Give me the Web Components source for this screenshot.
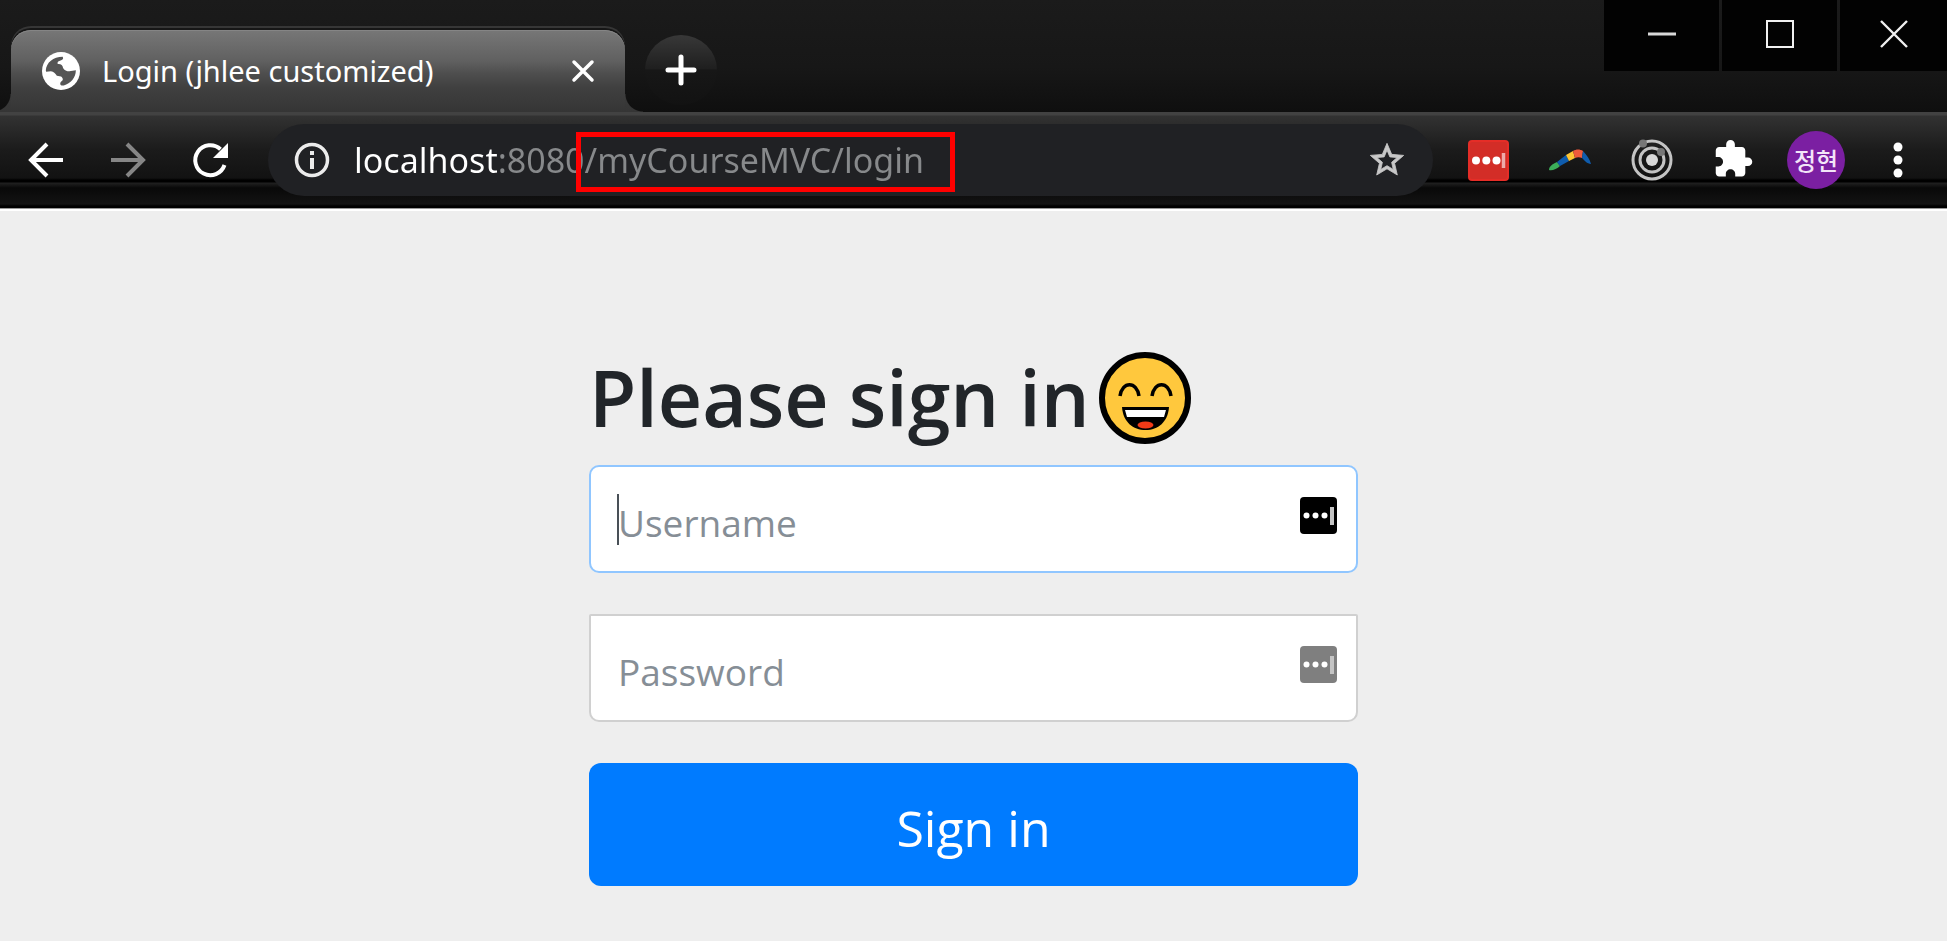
<!DOCTYPE html>
<html lang="en">
<head>
<meta charset="utf-8">
<title>Login (jhlee customized)</title>
<style>
  html, body { height: 100%; margin: 0; }
  body { font-family: "Open Sans", "Noto Sans", "Noto Sans CJK KR", sans-serif; background: #eee; }
</style>
</head>
<body>
<browser-window>
  <tab-strip slot="tabs">
    <browser-tab>Login (jhlee customized)</browser-tab>
  </tab-strip>
  <tool-bar slot="toolbar">
    <address-bar url="localhost:8080/myCourseMVC/login"></address-bar>
  </tool-bar>
  <login-form>
    <text-field name="username" label="Username" type="text" active></text-field>
    <text-field name="password" label="Password" type="password"></text-field>
  </login-form>
</browser-window>

<script>
const base = `
  :host, *, *::before, *::after { box-sizing: border-box; }
  button { font: inherit; color: inherit; border: 0; margin: 0; padding: 0; background: none; display: grid; place-items: center; }
  svg { display: block; }
`;

function define(name, markup, setup) {
  const template = document.createElement('template');
  template.innerHTML = markup;
  customElements.define(name, class extends HTMLElement {
    connectedCallback() {
      if (this.shadowRoot) return;
      this.attachShadow({ mode: 'open' }).append(template.content.cloneNode(true));
      if (setup) setup(this, this.shadowRoot);
    }
  });
}

define('browser-window', `
<style>${base}
  :host { display: flex; flex-direction: column; min-height: 100%; }
  main { flex: 1; border-top: 2px solid #fff; background: #eee; }
</style>
<slot name="tabs"></slot>
<slot name="toolbar"></slot>
<main><slot></slot></main>
`);

define('tab-strip', `
<style>${base}
  :host { display: flex; align-items: flex-end; height: 112px; padding-left: 11px; color: #fff;
    background: linear-gradient(#1b1b1b, #171717 60%, #0f0f0f); }
  .new { width: 72px; height: 70px; margin: 0 auto 7px 20px; border-radius: 50%;
    background: linear-gradient(#383838, #1f1f1f 48%, #171717 50%, #121212); }
  .controls { display: flex; gap: 3px; align-self: flex-start; }
  .controls button { width: 115px; height: 71px; padding-bottom: 3px; background: #020202; }
  .controls button:last-child { width: 107px; }
</style>
<slot></slot>
<button class="new" aria-label="New tab">
  <svg width="32" height="32" viewBox="0 0 32 32" stroke="#fff" stroke-width="5" stroke-linecap="round"><path d="M16 3V29M3 16H29"/></svg>
</button>
<div class="controls">
  <button aria-label="Minimize"><svg width="28" height="28" viewBox="0 0 28 28" stroke="#d8d8d8" stroke-width="3"><path d="M0 14H28"/></svg></button>
  <button aria-label="Maximize"><svg width="28" height="28" viewBox="0 0 28 28" fill="none" stroke="#f0f0f0" stroke-width="2"><path d="M1 1H27V27H1Z"/></svg></button>
  <button aria-label="Close"><svg width="28" height="28" viewBox="0 0 28 28" stroke="#f0f0f0" stroke-width="2.400"><path d="M1 1L27 27M27 1L1 27"/></svg></button>
</div>
`);

define('browser-tab', `
<style>${base}
  :host { position: relative; display: flex; align-items: center; width: 614px; height: 82px; padding: 0 26px 0 31px;
    border-radius: 20px 20px 0 0; font: 29px/40px "Noto Sans", sans-serif;
    background: linear-gradient(#777, #606060 38%, #4f4f4f 52%, #404040 70%, #353535);
    box-shadow: inset 0 1px #858585, 0 -2px #161616, 0 -4px #363636; }
  :host::before, :host::after { content: ""; position: absolute; bottom: 0; width: 18px; height: 18px;
    background: linear-gradient(#3b3b3b, #353535); }
  :host::before { right: 100%; -webkit-mask: radial-gradient(circle at 0 0, transparent 17px, #000 18px); mask: radial-gradient(circle at 0 0, transparent 17px, #000 18px); }
  :host::after { left: 100%; -webkit-mask: radial-gradient(circle at 100% 0, transparent 17px, #000 18px); mask: radial-gradient(circle at 100% 0, transparent 17px, #000 18px); }
  .title { flex: 1; margin-left: 22px; white-space: nowrap; }
  button { width: 32px; height: 32px; }
</style>
<svg width="38" height="38" viewBox="0 0 110 110"><circle cx="55" cy="55" r="55" fill="#fff"/><path fill="#555" d="M11 53C13 31 32 14 60 14C63 20 60 24 52 25C46 26 43 31 46 35C54 34 60 38 61 46C64 52 72 56 79 56L98 53C98 74 83 92 63 97C52 99 51 91 55 86C63 82 61 75 55 71L43 69C38 62 34 57 26 56L12 57Z"/></svg>
<span class="title"><slot></slot></span>
<button aria-label="Close tab"><svg width="24" height="24" viewBox="0 0 24 24" stroke="#fff" stroke-width="3.500" stroke-linecap="round"><path d="M3 3L21 21M21 3L3 21"/></svg></button>
`);

define('tool-bar', `
<style>${base}
  :host { display: flex; align-items: center; height: 97px; padding: 0 8px 0 5px; color: #fff;
    border-bottom: 1px solid #999;
    background: linear-gradient(#424242 0 3px, #323232 4px, #1b1b1b 38px, #121212 66px, #000 68px 70px, #202020 71px, #090909 76px, #131313 92px, #000 94px); }
  button { width: 82px; height: 82px; flex: none; }
  slot { display: block; flex: 1; min-width: 0; margin: 0 14px 0 17px; }
  .avatar { display: grid; place-items: center; width: 58px; height: 58px; border-radius: 50%;
    background: #7b1fa2; color: #f3e5f8; font: 500 24px/32px "Noto Sans CJK KR", sans-serif; }
</style>
<button aria-label="Back"><svg width="36" height="36" viewBox="0 0 36 36" fill="none" stroke="#fff" stroke-width="4"><path d="M19 2L3 18L19 34M3 18H35"/></svg></button>
<button aria-label="Forward"><svg width="36" height="36" viewBox="0 0 36 36" fill="none" stroke="#868686" stroke-width="4"><path d="M17 2L33 18L17 34M33 18H1"/></svg></button>
<button aria-label="Reload"><svg width="38" height="38" viewBox="0 0 38 38" fill="none" stroke="#fff" stroke-width="4"><path d="M33.500 24A15 15 0 1 1 29.500 8.200"/><path d="M37 2V17H22Z" fill="#fff" stroke="none"/></svg></button>
<slot></slot>
<button aria-label="Password manager"><svg width="41" height="41" viewBox="0 0 41 41"><rect width="41" height="41" rx="4" fill="#e52d27"/><rect x="2" y="2" width="37" height="37" rx="2" fill="#d32d27"/><g fill="#fff"><circle cx="8" cy="20.500" r="4"/><circle cx="18.300" cy="20.500" r="4"/><circle cx="28.500" cy="20.500" r="4"/></g><path d="M35.500 13V28" stroke="#eaa" stroke-width="3.500"/></svg></button>
<button aria-label="Boomerang extension"><svg width="42" height="22" viewBox="0 0 42 22"><path fill="#3cae5a" d="M0 21C0 17 4 15 8 13L11 17C8 20 3 22 0 21Z"/><path fill="#0f5cad" d="M8 13L17 6L20 12L11 17Z"/><path fill="#fdc534" d="M17 6L24 2L26 9L20 12Z"/><path fill="#ee5a3c" d="M24 2C27 0 31 0 34 2L33 9C31 8 28 8 26 9Z"/><path fill="#0f5cad" d="M34 2C38 6 41 11 42 15C38 15 35 11 33 9Z"/></svg></button>
<button aria-label="Target extension"><svg width="42" height="42" viewBox="0 0 42 42" fill="none" stroke="#c4c4c4"><circle cx="21" cy="21" r="19" stroke-width="3"/><circle cx="21" cy="21" r="12" stroke-width="3"/><circle cx="21" cy="21" r="6" fill="#d8d8d8" stroke="none"/><circle cx="12" cy="4.500" r="4" fill="#777" stroke="none"/><circle cx="30" cy="13" r="4" fill="#777" stroke="none"/></svg></button>
<button aria-label="Extensions"><svg width="40" height="40" viewBox="1 1 23 23" fill="#fff"><path d="M20.500 11H19V7c0-1.100-.9-2-2-2h-4V3.500a2.500 2.500 0 0 0-5 0V5H4c-1.100 0-1.990.9-1.990 2v3.800H3.500c1.490 0 2.700 1.210 2.700 2.700s-1.210 2.700-2.700 2.700H2V20c0 1.100.9 2 2 2h3.800v-1.500c0-1.490 1.210-2.700 2.700-2.700s2.700 1.210 2.700 2.700V22H17c1.100 0 2-.9 2-2v-4h1.500a2.500 2.500 0 0 0 0-5z"/></svg></button>
<button aria-label="Profile"><span class="avatar">정현</span></button>
<button aria-label="Menu"><svg width="10" height="36" viewBox="0 0 10 36" fill="#fff"><circle cx="5" cy="5" r="4.500"/><circle cx="5" cy="18" r="4.500"/><circle cx="5" cy="31" r="4.500"/></svg></button>
`);

define('address-bar', `
<style>${base}
  :host { position: relative; display: flex; align-items: center; height: 72px; padding: 0 18px 0 26px; border-radius: 36px; background: #202124; }
  /* The host name is white, the rest of the address grey. */
  input { flex: 1; min-width: 0; height: 56px; margin-left: 24px; padding: 0; border: 0; outline: 0;
    font: 34px/56px "Noto Sans", sans-serif; -webkit-text-fill-color: transparent; color: #9a9a9a;
    background: linear-gradient(90deg, #fff 144px, #87898b 144px); -webkit-background-clip: text; background-clip: text; }
  button { width: 56px; height: 56px; }
  .mark { position: absolute; left: 308px; top: 8px; width: 379px; height: 60px; border: 5px solid #f00; pointer-events: none; }
</style>
<svg width="36" height="36" viewBox="0 0 36 36" fill="none" stroke="#ececec"><circle cx="18" cy="18" r="15.500" stroke-width="3.500"/><path d="M18 16V27M18 9V13" stroke-width="4"/></svg>
<input type="text" aria-label="Address" spellcheck="false">
<button aria-label="Bookmark this page"><svg width="40" height="40" viewBox="0 0 24 24" fill="#c8c8c8" stroke="#c8c8c8" stroke-width=".5"><path d="M22 9.240l-7.190-.62L12 2 9.190 8.630 2 9.240l5.460 4.730L5.820 21 12 17.270 18.180 21l-1.630-7.030L22 9.240zM12 15.400l-3.760 2.270 1-4.280-3.320-2.880 4.380-.38L12 6.100l1.710 4.040 4.380.38-3.320 2.880 1 4.280L12 15.400z"/></svg></button>
<span class="mark"></span>
`, (host, root) => { root.querySelector('input').value = host.getAttribute('url'); });

define('login-form', `
<style>${base}
  :host { display: block; padding: 140px 16px 48px; }
  form { display: flex; flex-direction: column; gap: 41px; width: 100%; max-width: 769px; margin: 0 auto; }
  .fields { display: flex; flex-direction: column; gap: 41px; }
  h1 { display: flex; align-items: center; margin: 0 0 -21px; font-size: 77px; line-height: 94px; font-weight: 600; color: #212529; white-space: nowrap; }
  h1 svg { margin-left: 8px; }
  button { height: 123px; padding-top: 6px; border-radius: 12px; background: #007bff; color: #fff; font-size: 50px; line-height: 64px; }
</style>
<form>
  <h1>Please sign in<svg width="94" height="94" viewBox="0 0 94 94" role="img" aria-label="smiling face"><circle cx="47" cy="47" r="43" fill="#ffc83d" stroke="#000" stroke-width="6"/><g fill="none" stroke="#000" stroke-width="3.500"><path d="M22 45C24 30 39 30 41 45M54 45C56 30 71 30 73 45"/></g><path fill="#000" d="M24 56H71C70 71 60 79 47.500 79S25 71 24 56Z"/><path fill="#fff" d="M27 59H68L66 66H29Z"/><ellipse cx="47.500" cy="74" rx="8" ry="3.500" fill="#f03a17"/></svg></h1>
  <div class="fields"><slot></slot></div>
  <button type="submit">Sign in</button>
</form>
`);

define('text-field', `
<style>${base}
  :host { display: block; position: relative; height: 108px; }
  input { display: block; width: 100%; height: 100%; padding: 6px 80px 0 27px; border: 2px solid #d0d0d0; border-radius: 2px 2px 10px 10px;
    background: #fff; color: #495057; outline: 0; font: 37px/56px "Open Sans", "Noto Sans", sans-serif; }
  input::placeholder { color: #868e96; opacity: 1; }
  :host([active]) input { border-color: #90c6ff; border-radius: 10px; }
  .caret { display: none; position: absolute; left: 28px; top: 29px; width: 2px; height: 51px; background: #495057; }
  :host([active]) .caret { display: block; }
  .fill { position: absolute; right: 21px; top: 32px; color: #7f7f7f; }
  :host([active]) .fill { color: #000; }
</style>
<input>
<span class="caret"></span>
<button class="fill" type="button" aria-label="Fill from password manager"><svg width="37" height="37" viewBox="0 0 37 37"><rect width="37" height="37" rx="4" fill="currentColor"/><g fill="#fff"><circle cx="6.500" cy="18.500" r="3"/><circle cx="15.500" cy="18.500" r="3"/><circle cx="24.500" cy="18.500" r="3"/></g><path d="M32 10V28" stroke="#c4c4c4" stroke-width="4"/></svg></button>
`, (host, root) => {
  const input = root.querySelector('input');
  input.type = host.getAttribute('type');
  input.name = host.getAttribute('name');
  input.placeholder = host.getAttribute('label');
  input.setAttribute('aria-label', host.getAttribute('label'));
});
</script>
</body>
</html>
